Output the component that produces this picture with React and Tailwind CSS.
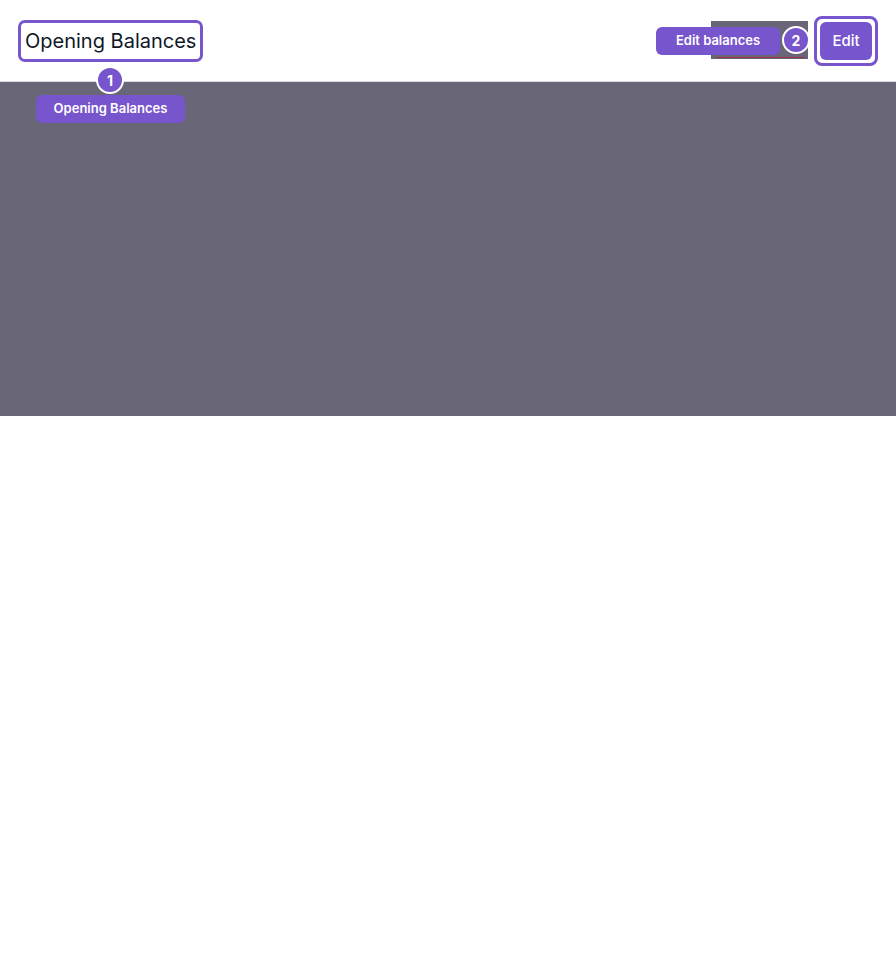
import React from "react";

const font = { fontFamily: "Inter, 'Noto Sans', sans-serif" };

function StepBadge({ n }) {
  return (
    <div className="flex h-[28px] w-[28px] items-center justify-center rounded-full border-2 border-white bg-[#7755cc] text-[14px] font-bold text-white">
      {n}
    </div>
  );
}

export default function App() {
  return (
    <div className="min-h-[967px] bg-white" style={font}>
      <header className="relative flex h-[82px] items-start justify-between border-b border-[#d9d9e0] pl-[18px] pr-[18px] pt-[20px]">
        <div className="relative">
          <h1 className="rounded-[7px] border-[3px] border-[#7755cc] px-[4px] py-[3px] text-[20px] leading-[30px] text-[#111827]">
            Opening Balances
          </h1>
          <div className="absolute left-[78px] top-[46px] z-10">
            <StepBadge n={1} />
          </div>
          <div className="absolute left-[18px] top-[75px] z-10 flex h-[28px] w-[149px] items-center justify-center rounded-[6px] bg-[#7755cc] text-[13px] font-semibold text-white">
            Opening Balances
          </div>
        </div>

        <div className="flex items-start">
          <div className="relative mt-[1px] h-[38px] w-[97px] bg-[#686677]">
            <div className="absolute bottom-[1px] left-[5px] right-[3px] h-[1px] bg-[#9b3345]" />
            <div className="absolute left-[-55px] top-[6px] flex h-[28px] w-[124px] items-center justify-center rounded-[6px] bg-[#7755cc] text-[13px] font-semibold text-white">
              Edit balances
            </div>
            <div className="absolute left-[71px] top-[5px]">
              <StepBadge n={2} />
            </div>
          </div>
          <div className="ml-[6px] mt-[-4px] rounded-[8px] border-[3px] border-[#7755cc] bg-white p-[3px]">
            <button className="flex h-[38px] w-[52px] items-center justify-center rounded-[6px] bg-[#7755cc] text-[15px] font-medium text-white">
              Edit
            </button>
          </div>
        </div>
      </header>
      <div className="h-[334px] bg-[#686677]" />
    </div>
  );
}
